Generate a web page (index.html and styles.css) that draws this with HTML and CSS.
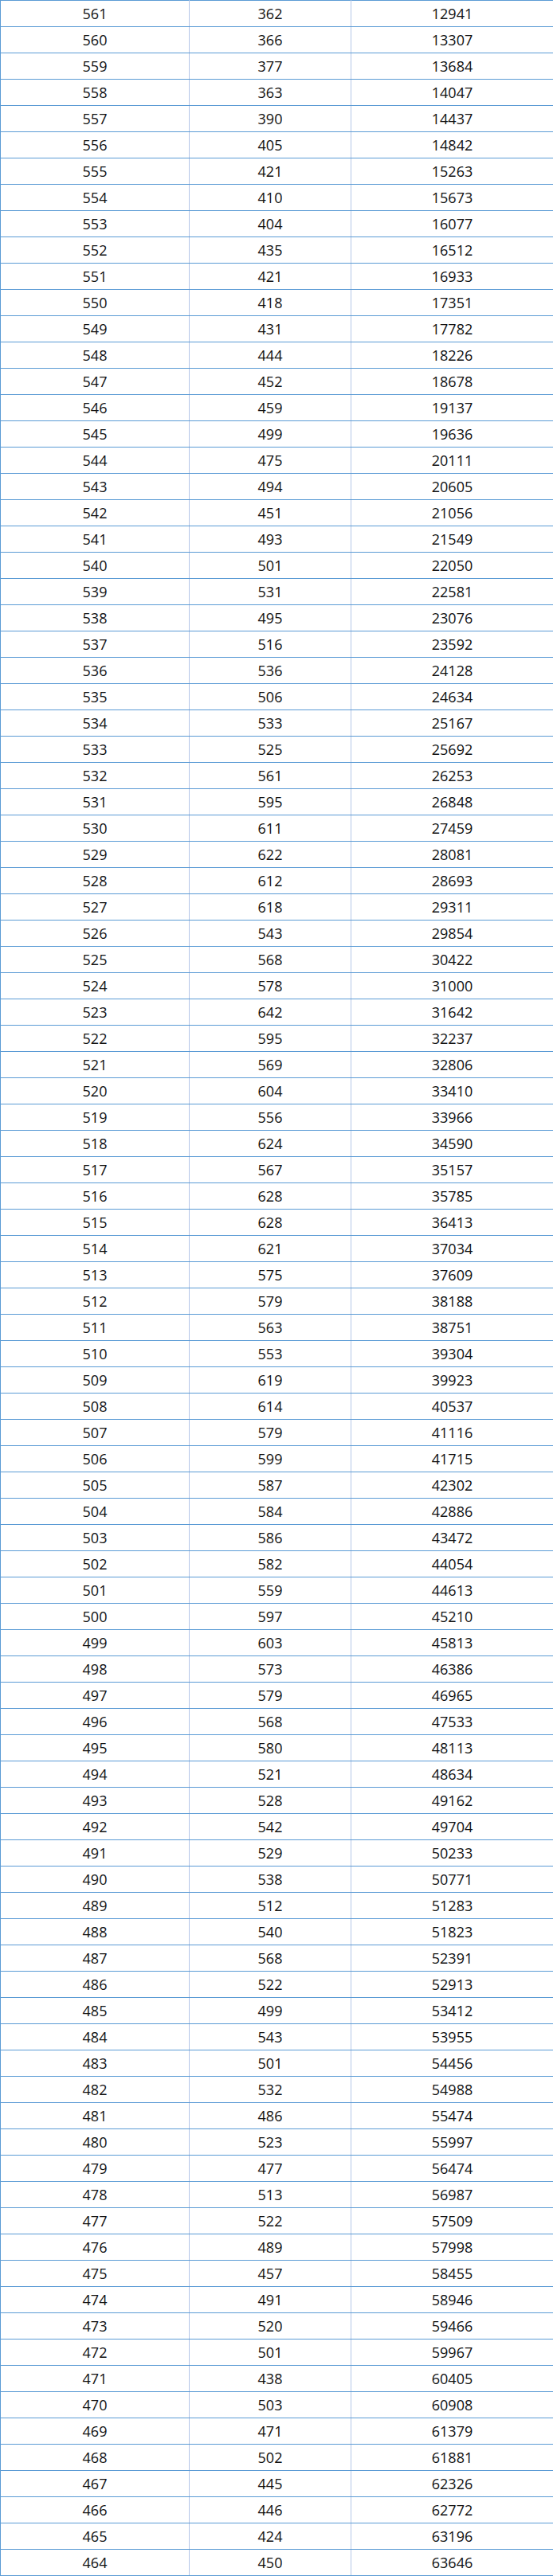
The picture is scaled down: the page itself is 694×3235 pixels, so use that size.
FILE: index.html
```html
<!DOCTYPE html>
<html>
<head>
<meta charset="utf-8">
<link rel="stylesheet" href="styles.css">
</head>
<body>
<table class="score-table">
<colgroup><col class="c1"><col class="c2"><col class="c3"></colgroup>
<tbody>
<tr><td>561</td><td>362</td><td>12941</td></tr>
<tr><td>560</td><td>366</td><td>13307</td></tr>
<tr><td>559</td><td>377</td><td>13684</td></tr>
<tr><td>558</td><td>363</td><td>14047</td></tr>
<tr><td>557</td><td>390</td><td>14437</td></tr>
<tr><td>556</td><td>405</td><td>14842</td></tr>
<tr><td>555</td><td>421</td><td>15263</td></tr>
<tr><td>554</td><td>410</td><td>15673</td></tr>
<tr><td>553</td><td>404</td><td>16077</td></tr>
<tr><td>552</td><td>435</td><td>16512</td></tr>
<tr><td>551</td><td>421</td><td>16933</td></tr>
<tr><td>550</td><td>418</td><td>17351</td></tr>
<tr><td>549</td><td>431</td><td>17782</td></tr>
<tr><td>548</td><td>444</td><td>18226</td></tr>
<tr><td>547</td><td>452</td><td>18678</td></tr>
<tr><td>546</td><td>459</td><td>19137</td></tr>
<tr><td>545</td><td>499</td><td>19636</td></tr>
<tr><td>544</td><td>475</td><td>20111</td></tr>
<tr><td>543</td><td>494</td><td>20605</td></tr>
<tr><td>542</td><td>451</td><td>21056</td></tr>
<tr><td>541</td><td>493</td><td>21549</td></tr>
<tr><td>540</td><td>501</td><td>22050</td></tr>
<tr><td>539</td><td>531</td><td>22581</td></tr>
<tr><td>538</td><td>495</td><td>23076</td></tr>
<tr><td>537</td><td>516</td><td>23592</td></tr>
<tr><td>536</td><td>536</td><td>24128</td></tr>
<tr><td>535</td><td>506</td><td>24634</td></tr>
<tr><td>534</td><td>533</td><td>25167</td></tr>
<tr><td>533</td><td>525</td><td>25692</td></tr>
<tr><td>532</td><td>561</td><td>26253</td></tr>
<tr><td>531</td><td>595</td><td>26848</td></tr>
<tr><td>530</td><td>611</td><td>27459</td></tr>
<tr><td>529</td><td>622</td><td>28081</td></tr>
<tr><td>528</td><td>612</td><td>28693</td></tr>
<tr><td>527</td><td>618</td><td>29311</td></tr>
<tr><td>526</td><td>543</td><td>29854</td></tr>
<tr><td>525</td><td>568</td><td>30422</td></tr>
<tr><td>524</td><td>578</td><td>31000</td></tr>
<tr><td>523</td><td>642</td><td>31642</td></tr>
<tr><td>522</td><td>595</td><td>32237</td></tr>
<tr><td>521</td><td>569</td><td>32806</td></tr>
<tr><td>520</td><td>604</td><td>33410</td></tr>
<tr><td>519</td><td>556</td><td>33966</td></tr>
<tr><td>518</td><td>624</td><td>34590</td></tr>
<tr><td>517</td><td>567</td><td>35157</td></tr>
<tr><td>516</td><td>628</td><td>35785</td></tr>
<tr><td>515</td><td>628</td><td>36413</td></tr>
<tr><td>514</td><td>621</td><td>37034</td></tr>
<tr><td>513</td><td>575</td><td>37609</td></tr>
<tr><td>512</td><td>579</td><td>38188</td></tr>
<tr><td>511</td><td>563</td><td>38751</td></tr>
<tr><td>510</td><td>553</td><td>39304</td></tr>
<tr><td>509</td><td>619</td><td>39923</td></tr>
<tr><td>508</td><td>614</td><td>40537</td></tr>
<tr><td>507</td><td>579</td><td>41116</td></tr>
<tr><td>506</td><td>599</td><td>41715</td></tr>
<tr><td>505</td><td>587</td><td>42302</td></tr>
<tr><td>504</td><td>584</td><td>42886</td></tr>
<tr><td>503</td><td>586</td><td>43472</td></tr>
<tr><td>502</td><td>582</td><td>44054</td></tr>
<tr><td>501</td><td>559</td><td>44613</td></tr>
<tr><td>500</td><td>597</td><td>45210</td></tr>
<tr><td>499</td><td>603</td><td>45813</td></tr>
<tr><td>498</td><td>573</td><td>46386</td></tr>
<tr><td>497</td><td>579</td><td>46965</td></tr>
<tr><td>496</td><td>568</td><td>47533</td></tr>
<tr><td>495</td><td>580</td><td>48113</td></tr>
<tr><td>494</td><td>521</td><td>48634</td></tr>
<tr><td>493</td><td>528</td><td>49162</td></tr>
<tr><td>492</td><td>542</td><td>49704</td></tr>
<tr><td>491</td><td>529</td><td>50233</td></tr>
<tr><td>490</td><td>538</td><td>50771</td></tr>
<tr><td>489</td><td>512</td><td>51283</td></tr>
<tr><td>488</td><td>540</td><td>51823</td></tr>
<tr><td>487</td><td>568</td><td>52391</td></tr>
<tr><td>486</td><td>522</td><td>52913</td></tr>
<tr><td>485</td><td>499</td><td>53412</td></tr>
<tr><td>484</td><td>543</td><td>53955</td></tr>
<tr><td>483</td><td>501</td><td>54456</td></tr>
<tr><td>482</td><td>532</td><td>54988</td></tr>
<tr><td>481</td><td>486</td><td>55474</td></tr>
<tr><td>480</td><td>523</td><td>55997</td></tr>
<tr><td>479</td><td>477</td><td>56474</td></tr>
<tr><td>478</td><td>513</td><td>56987</td></tr>
<tr><td>477</td><td>522</td><td>57509</td></tr>
<tr><td>476</td><td>489</td><td>57998</td></tr>
<tr><td>475</td><td>457</td><td>58455</td></tr>
<tr><td>474</td><td>491</td><td>58946</td></tr>
<tr><td>473</td><td>520</td><td>59466</td></tr>
<tr><td>472</td><td>501</td><td>59967</td></tr>
<tr><td>471</td><td>438</td><td>60405</td></tr>
<tr><td>470</td><td>503</td><td>60908</td></tr>
<tr><td>469</td><td>471</td><td>61379</td></tr>
<tr><td>468</td><td>502</td><td>61881</td></tr>
<tr><td>467</td><td>445</td><td>62326</td></tr>
<tr><td>466</td><td>446</td><td>62772</td></tr>
<tr><td>465</td><td>424</td><td>63196</td></tr>
<tr><td>464</td><td>450</td><td>63646</td></tr>
</tbody>
</table>
</body>
</html>
```
FILE: styles.css
```css
html, body {
  margin: 0;
  padding: 0;
  background: #ffffff;
}

.score-table {
  width: 694px;
  border-collapse: collapse;
  table-layout: fixed;
  font-family: "Open Sans", "Noto Sans", sans-serif;
  font-size: 18px;
  color: #111111;
}

.c1 { width: 237px; }
.c2 { width: 203px; }
.c3 { width: 254px; }

.score-table td {
  height: 32px;
  padding: 0;
  text-align: center;
  vertical-align: middle;
  line-height: 32px;
  border-top: 1px solid #5b9bd5;
  border-bottom: 1px solid #5b9bd5;
  border-left: 1px solid #b4c6e7;
  border-right: 1px solid #b4c6e7;
}

.score-table td:first-child {
  border-left: 1px solid #5b9bd5;
}

.score-table td:last-child {
  border-right: 1px solid #5b9bd5;
}
```
